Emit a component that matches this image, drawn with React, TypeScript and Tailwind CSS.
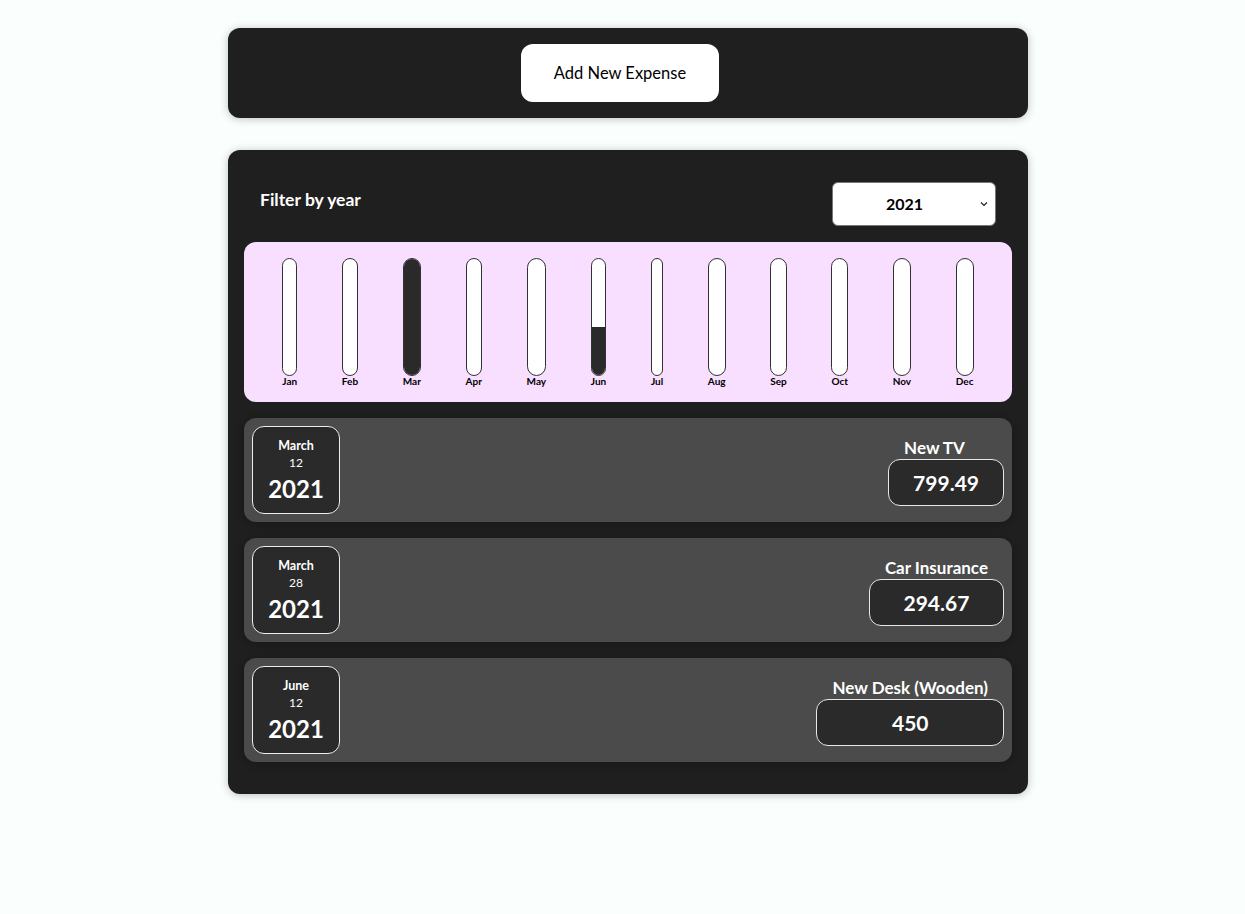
import React, { useState } from 'react';

type Expense = {
  id: string;
  title: string;
  amount: number;
  date: Date;
};

const EXPENSES: Expense[] = [
  { id: 'e1', title: 'New TV', amount: 799.49, date: new Date(2021, 2, 12) },
  { id: 'e2', title: 'Car Insurance', amount: 294.67, date: new Date(2021, 2, 28) },
  { id: 'e3', title: 'New Desk (Wooden)', amount: 450, date: new Date(2021, 5, 12) },
];

const MONTHS = ['Jan', 'Feb', 'Mar', 'Apr', 'May', 'Jun', 'Jul', 'Aug', 'Sep', 'Oct', 'Nov', 'Dec'];

const ChartBar: React.FC<{ label: string; value: number; max: number }> = ({ label, value, max }) => {
  const fill = max > 0 ? Math.round((value / max) * 100) + '%' : '0%';
  return (
    <div className="h-full flex flex-col items-center">
      <div className="flex-1 w-full border border-[#313131] rounded-xl bg-white overflow-hidden flex flex-col justify-end">
        <div className="w-full bg-[#2a2a2a]" style={{ height: fill }} />
      </div>
      <div className="text-[10px] leading-[10px] font-bold text-black text-center">{label}</div>
    </div>
  );
};

const ExpenseDate: React.FC<{ date: Date }> = ({ date }) => {
  const month = date.toLocaleString('en-US', { month: 'long' });
  const day = date.toLocaleString('en-US', { day: '2-digit' });
  const year = date.getFullYear();
  return (
    <div className="w-[88px] h-[88px] pt-1 flex flex-col items-center justify-center border border-[#ececec] rounded-xl bg-[#2a2a2a] text-white">
      <div className="text-[12.5px] leading-[16px] font-bold">{month}</div>
      <div className="text-[12px] leading-[18px]">{day}</div>
      <div className="text-[24px] leading-[34px] font-bold">{year}</div>
    </div>
  );
};

const ExpenseItem: React.FC<{ expense: Expense }> = ({ expense }) => (
  <div className="flex justify-between items-center p-2 rounded-xl bg-[#4b4b4b] shadow-[0_2px_8px_rgba(0,0,0,0.25)]">
    <ExpenseDate date={expense.date} />
    <div className="self-end mb-2 flex flex-col">
      <h2 className="mx-4 text-[17px] leading-[22px] font-bold text-white">{expense.title}</h2>
      <div className="h-[47px] px-6 flex items-center justify-center border border-[#e8e8e8] rounded-xl bg-[#2a2a2a] text-white text-[21px] font-bold">
        {expense.amount}
      </div>
    </div>
  </div>
);

const App: React.FC = () => {
  const [year, setYear] = useState('2021');

  const filtered = EXPENSES.filter(e => e.date.getFullYear().toString() === year);

  // monthly totals for the chart
  const monthly = MONTHS.map(() => 0);
  filtered.forEach(e => {
    monthly[e.date.getMonth()] += e.amount;
  });
  const max = Math.max(...monthly);

  return (
    <div className="min-h-screen bg-[#fafefd] pt-[28px] pb-10 pl-[11px] font-['Lato',sans-serif]">
      <div className="w-[800px] mx-auto p-4 flex justify-center rounded-xl bg-[#1f1f1f] shadow-[0_1px_8px_rgba(0,0,0,0.25)]">
        <button className="w-[198px] h-[58px] mr-4 rounded-xl bg-white text-black text-[16.5px]">
          Add New Expense
        </button>
      </div>

      <div className="w-[800px] mx-auto mt-8 p-4 rounded-xl bg-[#1f1f1f] shadow-[0_1px_8px_rgba(0,0,0,0.25)]">
        <div className="px-4 my-4 flex justify-between items-center text-white">
          <label className="font-bold text-[17.5px] mb-2">Filter by year</label>
          <div className="relative">
            <select
              value={year}
              onChange={e => setYear(e.target.value)}
              className="appearance-none block w-[164px] h-[44px] pl-[53px] pr-12 font-bold text-[16px] text-black bg-white border border-[#767676] rounded-md"
            >
              <option value="2022">2022</option>
              <option value="2021">2021</option>
              <option value="2020">2020</option>
              <option value="2019">2019</option>
            </select>
            <svg
              className="absolute right-[8px] top-[19px] pointer-events-none"
              width="8"
              height="6"
              viewBox="0 0 8 6"
              fill="none"
            >
              <path d="M1 1.5 L4 4.5 L7 1.5" stroke="#222" strokeWidth="1.2" />
            </svg>
          </div>
        </div>

        <div className="h-[160px] p-4 flex justify-around rounded-xl bg-[#f8dfff]">
          {MONTHS.map((m, i) => (
            <ChartBar key={m} label={m} value={monthly[i]} max={max} />
          ))}
        </div>

        <div className="flex flex-col gap-4 my-4">
          {filtered.map(e => (
            <ExpenseItem key={e.id} expense={e} />
          ))}
        </div>
      </div>
    </div>
  );
};

export default App;
